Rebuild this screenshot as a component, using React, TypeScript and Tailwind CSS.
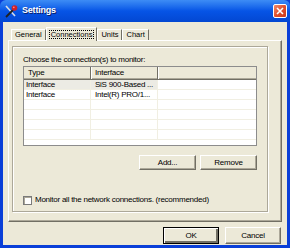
import React from "react";

const raised =
  "border border-t-white border-l-white border-r-[#716f64] border-b-[#716f64] shadow-[inset_-1px_-1px_0_#aca899]";

function Btn({ label, def, w }: { label: string; def?: boolean; w: string }) {
  return (
    <div
      className={
        "h-full flex items-center justify-center bg-[#ece9d8] text-black " +
        w +
        " " +
        (def ? "border border-black shadow-[inset_1px_1px_0_#fff,inset_-2px_-2px_0_#716f64]" : raised)
      }
    >
      {label}
    </div>
  );
}

function Tab({ label, active }: { label: string; active?: boolean }) {
  if (active) {
    return (
      <div className="relative z-10 -mb-px h-[14px] px-[2px] pt-[2px] bg-[#ece9d8] border-t border-l border-white border-r border-r-[#716f64]">
        <div className="px-[1px] h-[9px] leading-[8px] border border-dotted border-black">Connections</div>
      </div>
    );
  }
  return (
    <div className="h-[11px] px-[3px] leading-[10px] border-t border-l border-white border-r border-r-[#716f64]">
      {label}
    </div>
  );
}

const rows = [
  { type: "Interface", name: "SiS 900-Based ...", sel: true },
  { type: "Interface", name: "Intel(R) PRO/1...", sel: false },
  null,
  null,
  null,
  null,
];

export default function App() {
  return (
    <div className="w-[290px] h-[248px] flex flex-col bg-[#0a3fd8] font-['Liberation_Sans',Arial,sans-serif] text-[8px] tracking-[-0.25px] text-black overflow-hidden">
      {/* title bar */}
      <div className="h-[22px] shrink-0 flex items-center pl-[4px] pr-[3px] rounded-t-[6px] bg-gradient-to-b from-[#3d8cf5] via-[#0654e6] to-[#0347d2]">
        <svg width="14" height="14" viewBox="0 0 14 14">
          <line x1="2" y1="2" x2="11" y2="12" stroke="#d8dde8" strokeWidth="1.6" />
          <line x1="2" y1="13" x2="9" y2="6" stroke="#202020" strokeWidth="1.8" />
          <circle cx="10.5" cy="4" r="2.8" fill="#d0202a" />
          <circle cx="9.8" cy="3.3" r="0.9" fill="#ff8080" />
        </svg>
        <span className="ml-[4px] text-white font-bold text-[9px] tracking-[-0.2px] [text-shadow:1px_1px_0_#0a1e6a]">
          Settings
        </span>
        <div className="ml-auto w-[14px] h-[14px] rounded-[2px] border border-white bg-gradient-to-br from-[#f08a6a] via-[#e0502e] to-[#c83a1a] flex items-center justify-center">
          <svg width="8" height="8" viewBox="0 0 8 8">
            <path d="M1 1 L7 7 M7 1 L1 7" stroke="#fff" strokeWidth="1.6" />
          </svg>
        </div>
      </div>

      {/* client */}
      <div className="flex-1 mx-[3px] mb-[3px] bg-[#ece9d8] flex flex-col">
        <div className="flex items-end pl-[8px] pt-[5px] h-[18px] tracking-normal text-[7.5px]">
          <Tab label="General" />
          <Tab label="Connections" active />
          <Tab label="Units" />
          <Tab label="Chart" />
        </div>

        <div className="ml-[5px] w-[274px] h-[182px] border border-t-white border-l-white border-r-[#716f64] border-b-[#716f64] shadow-[inset_-1px_-1px_0_#aca899] pl-[3px] pt-[5px]">
          <div className="w-[256px] h-[166px] border border-[#aca899] shadow-[1px_1px_0_#fff,inset_1px_1px_0_#fff] pt-[8px] px-[10px] flex flex-col">
            <div className="h-[10px] leading-[10px]">Choose the connection(s) to monitor:</div>
            <div className="mt-px w-[234px] h-[80px] border border-[#8c8c8c] bg-white flex flex-col overflow-hidden">
              <div className="h-[13px] shrink-0 flex bg-[#ece9d8] border-b border-[#716f64] shadow-[inset_0_-1px_0_#aca899]">
                <div className="w-[67px] pl-[4px] leading-[12px] border-r border-[#716f64] shadow-[1px_0_0_#fff]">Type</div>
                <div className="w-[67px] pl-[4px] leading-[12px] border-r border-[#716f64] shadow-[1px_0_0_#fff]">Interface</div>
                <div className="flex-1" />
              </div>
              {rows.map((r, i) => (
                <div key={i} className="h-[10px] shrink-0 flex border-b border-[#f1efe2]">
                  <div className={"w-[67px] pl-[2px] leading-[9px] border-r border-[#f1efe2] " + (r?.sel ? "bg-[#ecebe4]" : "")}>
                    {r?.type}
                  </div>
                  <div className={"w-[67px] pl-[4px] leading-[9px] border-r border-[#f1efe2] whitespace-nowrap overflow-hidden " + (r?.sel ? "bg-[#ecebe4]" : "")}>
                    {r?.name}
                  </div>
                  <div className="flex-1" />
                </div>
              ))}
            </div>
            <div className="mt-[9px] h-[15px] flex justify-end gap-[4px]">
              <Btn label="Add..." w="w-[57px]" />
              <Btn label="Remove" w="w-[57px]" />
            </div>
            <div className="mt-[24px] flex items-center gap-[3px]">
              <div className="w-[9px] h-[9px] bg-white border border-[#7a7a7a] shadow-[inset_1px_1px_0_#aca899]" />
              <span>Monitor all the network connections. (recommended)</span>
            </div>
          </div>
        </div>

        <div className="mt-[5px] h-[17px] flex justify-end gap-[6px] pr-[6px]">
          <Btn label="OK" def w="w-[56px]" />
          <Btn label="Cancel" w="w-[56px]" />
        </div>
      </div>
    </div>
  );
}
